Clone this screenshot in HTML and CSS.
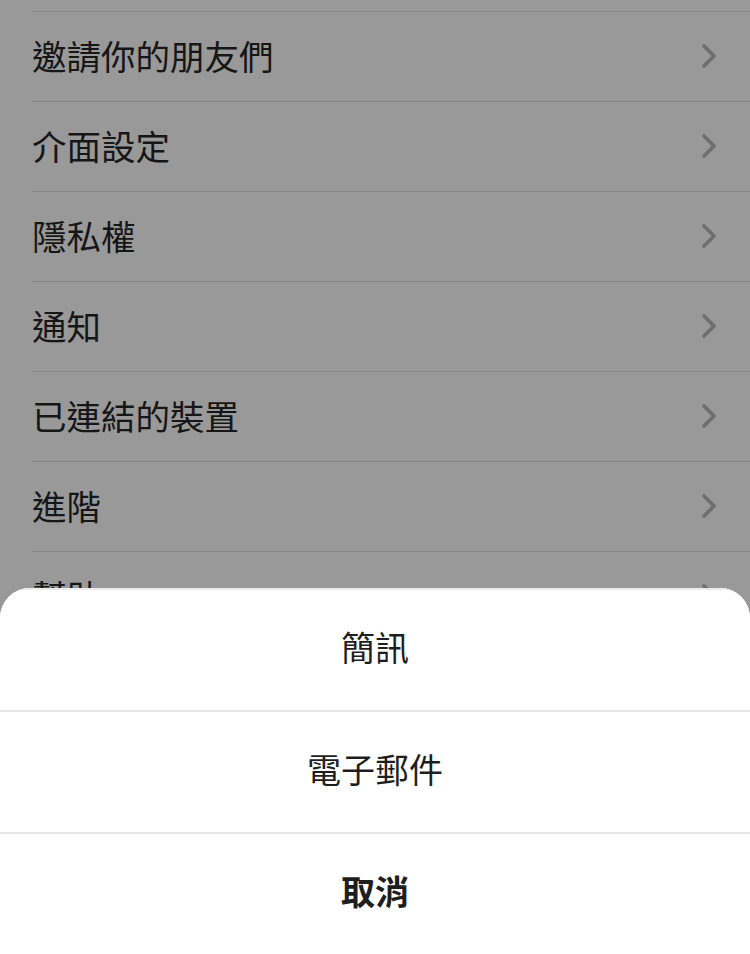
FILE: index.html
```html
<!DOCTYPE html>
<html lang="zh-Hant">
<head>
<meta charset="utf-8">
<title>設定</title>
<link rel="stylesheet" href="styles.css">
</head>
<body>
<ul class="list">
  <li class="row"><span class="label">邀請你的朋友們</span><svg class="chev" viewBox="0 0 16 26"><polyline points="3,3 13,13 3,23"/></svg></li>
  <li class="row"><span class="label">介面設定</span><svg class="chev" viewBox="0 0 16 26"><polyline points="3,3 13,13 3,23"/></svg></li>
  <li class="row"><span class="label">隱私權</span><svg class="chev" viewBox="0 0 16 26"><polyline points="3,3 13,13 3,23"/></svg></li>
  <li class="row"><span class="label">通知</span><svg class="chev" viewBox="0 0 16 26"><polyline points="3,3 13,13 3,23"/></svg></li>
  <li class="row"><span class="label">已連結的裝置</span><svg class="chev" viewBox="0 0 16 26"><polyline points="3,3 13,13 3,23"/></svg></li>
  <li class="row"><span class="label">進階</span><svg class="chev" viewBox="0 0 16 26"><polyline points="3,3 13,13 3,23"/></svg></li>
  <li class="row"><span class="label">幫助</span><svg class="chev" viewBox="0 0 16 26"><polyline points="3,3 13,13 3,23"/></svg></li>
</ul>
<div class="sheet">
  <button class="action">簡訊</button>
  <button class="action">電子郵件</button>
  <button class="action cancel">取消</button>
</div>
</body>
</html>
```
FILE: styles.css
```css
html, body {
  margin: 0;
  padding: 0;
}
body {
  width: 750px;
  height: 954px;
  overflow: hidden;
  background: #999999;
  font-family: "Noto Sans CJK TC", "Noto Sans CJK SC", "Noto Sans", sans-serif;
}
.list {
  list-style: none;
  margin: 0;
  padding: 11px 0 0 32px;
}
.row {
  height: 89px;
  border-top: 1px solid #858585;
  display: flex;
  align-items: center;
  justify-content: space-between;
  padding-right: 33px;
}
.label {
  font-size: 34.5px;
  color: #161616;
  line-height: 1;
  margin-bottom: 2px;
}
.chev {
  width: 16px;
  height: 26px;
  margin-bottom: 1px;
}
.chev polyline {
  fill: none;
  stroke: #6e6e6e;
  stroke-width: 3.6;
  stroke-linecap: round;
  stroke-linejoin: round;
}
.sheet {
  position: fixed;
  left: 0;
  right: 0;
  bottom: 0;
  background: #ffffff;
  border-radius: 30px 30px 0 0;
  overflow: hidden;
  display: flex;
  flex-direction: column;
}
.action {
  height: 122px;
  border: none;
  border-top: 2px solid #e8e8e8;
  background: #ffffff;
  font-family: inherit;
  font-size: 34px;
  line-height: 1;
  color: #1e1e1e;
  padding: 0 0 6px 0;
  display: flex;
  align-items: center;
  justify-content: center;
}
.action:first-child {
  border-top-color: #ececec;
}
.cancel {
  font-weight: 700;
}
```
